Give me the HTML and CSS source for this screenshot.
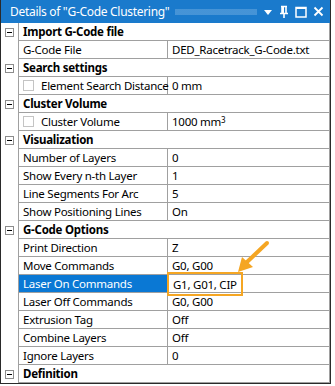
FILE: index.html
```html
<!DOCTYPE html>
<html>
<head>
<meta charset="utf-8">
<link rel="stylesheet" href="styles.css">
</head>
<body>
<div class="panel">
  <div class="titlebar">
    <span class="title">Details of "G-Code Clustering"</span>
    <span class="grip"></span>
    <span class="tb-icons">
      <svg width="10" height="8" viewBox="0 0 10 8"><path d="M1 2 H9 L5 7 Z" fill="#fff"/></svg>
      <svg width="10" height="14" viewBox="0 0 10 14"><path d="M2 1.5 H8 M3 1.5 V8 M7 1.5 V8 M1 8.5 H9 M5 8.5 V13" stroke="#fff" stroke-width="1.6" fill="none"/><rect x="3" y="1.5" width="2" height="7" fill="#fff"/></svg>
      <svg width="12" height="12" viewBox="0 0 12 12"><rect x="1" y="1.5" width="10" height="9.5" fill="none" stroke="#fff" stroke-width="1.5"/><rect x="1" y="1" width="10" height="2" fill="#fff"/></svg>
      <svg width="11" height="11" viewBox="0 0 11 11"><path d="M1.5 1.5 L9.5 9.5 M9.5 1.5 L1.5 9.5" stroke="#fff" stroke-width="1.8"/></svg>
    </span>
  </div>
  <div class="grid">
    <div class="row hdr"><div class="gut"><span class="tog"></span></div><div class="cell full">Import G-Code file</div></div>
    <div class="row"><div class="gut"></div><div class="cell lbl">G-Code File</div><div class="cell val">DED_Racetrack_G-Code.txt</div></div>
    <div class="row hdr"><div class="gut"><span class="tog"></span></div><div class="cell full">Search settings</div></div>
    <div class="row"><div class="gut"></div><div class="cell lbl"><span class="chk"></span>Element Search Distance</div><div class="cell val">0 mm</div></div>
    <div class="row hdr"><div class="gut"><span class="tog"></span></div><div class="cell full">Cluster Volume</div></div>
    <div class="row"><div class="gut"></div><div class="cell lbl"><span class="chk"></span>Cluster Volume</div><div class="cell val">1000 mm<sup class="sup">3</sup></div></div>
    <div class="row hdr"><div class="gut"><span class="tog"></span></div><div class="cell full">Visualization</div></div>
    <div class="row"><div class="gut"></div><div class="cell lbl">Number of Layers</div><div class="cell val">0</div></div>
    <div class="row"><div class="gut"></div><div class="cell lbl">Show Every n-th Layer</div><div class="cell val">1</div></div>
    <div class="row"><div class="gut"></div><div class="cell lbl">Line Segments For Arc</div><div class="cell val">5</div></div>
    <div class="row"><div class="gut"></div><div class="cell lbl">Show Positioning Lines</div><div class="cell val">On</div></div>
    <div class="row hdr"><div class="gut"><span class="tog"></span></div><div class="cell full">G-Code Options</div></div>
    <div class="row"><div class="gut"></div><div class="cell lbl">Print Direction</div><div class="cell val">Z</div></div>
    <div class="row"><div class="gut"></div><div class="cell lbl">Move Commands</div><div class="cell val">G0, G00</div></div>
    <div class="row sel"><div class="gut"></div><div class="cell lbl">Laser On Commands</div><div class="cell val"><span class="hl">G1, G01, CIP</span></div></div>
    <div class="row"><div class="gut"></div><div class="cell lbl">Laser Off Commands</div><div class="cell val">G0, G00</div></div>
    <div class="row"><div class="gut"></div><div class="cell lbl">Extrusion Tag</div><div class="cell val">Off</div></div>
    <div class="row"><div class="gut"></div><div class="cell lbl">Combine Layers</div><div class="cell val">Off</div></div>
    <div class="row"><div class="gut"></div><div class="cell lbl">Ignore Layers</div><div class="cell val">0</div></div>
    <div class="row hdr"><div class="gut"><span class="tog"></span></div><div class="cell full">Definition</div></div>
  </div>
  <svg class="arrow" width="40" height="40" viewBox="0 0 40 40">
    <path d="M34 3 L14 22" stroke="#f5a623" stroke-width="4" stroke-linecap="round" fill="none"/>
    <path d="M5 32 L9 17 L20 27 Z" fill="#f5a623"/>
  </svg>
</div>
</body>
</html>
```

FILE: styles.css
```css
html, body {
  margin: 0;
  padding: 0;
  background: #fff;
}
.panel {
  position: relative;
  width: 329px;
  border-left: 1px solid #2a2a2a;
  border-right: 1px solid #2a2a2a;
  border-bottom: 1px solid #2a2a2a;
  font-family: "Noto Sans", "Open Sans", sans-serif;
  font-size: 11.5px;
  letter-spacing: -0.25px;
  color: #000;
}
.titlebar {
  height: 23px;
  background: #1a7acc;
  display: flex;
  align-items: center;
  padding-left: 9px;
  color: #fff;
}
.title {
  font-size: 12px;
  letter-spacing: -0.3px;
  white-space: nowrap;
}
.grip {
  flex: 1;
  height: 6px;
  margin: 0 6px 0 6px;
  background-image: radial-gradient(circle, rgba(200,225,245,0.8) 0.5px, transparent 0.8px);
  background-size: 2px 2px;
}
.tb-icons {
  display: flex;
  align-items: center;
  gap: 6px;
  padding-right: 6px;
}
.tb-icons svg { display: block; }
.grid {
  display: flex;
  flex-direction: column;
}
.row {
  display: flex;
  height: 18px;
}
.gut {
  width: 17px;
  flex: none;
  border-right: 1px solid #a0a0a0;
  display: flex;
  align-items: center;
  justify-content: center;
}
.cell {
  border-bottom: 1px solid #a0a0a0;
  display: flex;
  align-items: center;
  white-space: nowrap;
  box-sizing: border-box;
  height: 18px;
}
.full {
  flex: 1;
  font-weight: bold;
  padding-left: 4px;
  border-right: 1px solid #a0a0a0;
}
.lbl {
  width: 149px;
  flex: none;
  padding-left: 4px;
  border-right: 1px solid #a0a0a0;
}
.val {
  flex: 1;
  padding-left: 4px;
  border-right: 1px solid #a0a0a0;
  position: relative;
}
.tog {
  width: 9px;
  height: 9px;
  box-sizing: border-box;
  border: 1px solid #8c8c8c;
  position: relative;
  background: #fff;
}
.tog::after {
  content: "";
  position: absolute;
  left: 1px;
  right: 1px;
  top: 3px;
  height: 1px;
  background: #000;
}
.chk {
  width: 11px;
  height: 11px;
  box-sizing: border-box;
  border: 1px solid #c4c4c4;
  margin-right: 7px;
  flex: none;
}
.sup {
  font-size: 8px;
  align-self: flex-start;
  margin-top: 1px;
}
.sel .lbl {
  background: #0a78d4;
  color: #fff;
}
.hl {
  position: absolute;
  left: -1px;
  top: -3px;
  height: 20px;
  padding: 0 4px;
  display: flex;
  align-items: center;
  border: 2px solid #f5a623;
}
.arrow {
  position: absolute;
  left: 232px;
  top: 240px;
}
```
